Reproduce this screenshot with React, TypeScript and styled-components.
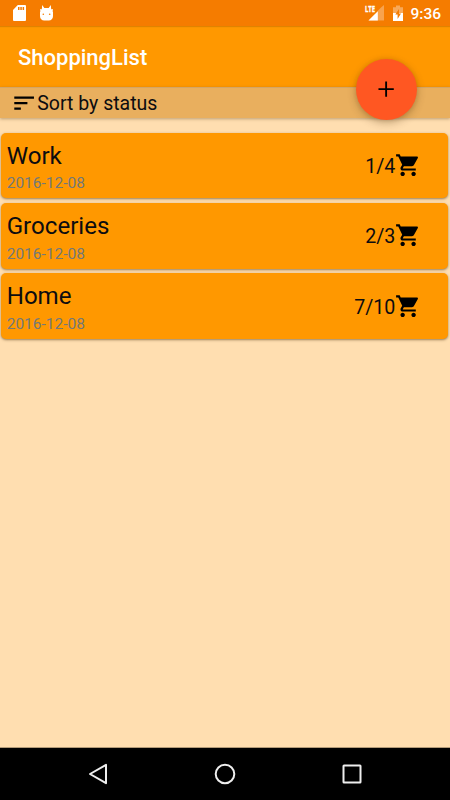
import React from 'react';
import styled, { createGlobalStyle } from 'styled-components';

const GlobalStyle = createGlobalStyle`
  * { box-sizing: border-box; }
  html, body { margin: 0; padding: 0; }
  body { font-family: Roboto, "Liberation Sans", sans-serif; color: #0c0c10; }
  svg { display: block; flex: none; overflow: visible; }
`;

const Screen = styled.div`
  width: 450px;
  height: 800px;
  display: flex;
  flex-direction: column;
  overflow: hidden;
  background: #ffdeb0;
`;

const StatusBar = styled.div`
  height: 26px;
  flex: none;
  display: flex;
  align-items: center;
  justify-content: space-between;
  padding: 0 9px 0 13px;
  background: #f57c00;
  box-shadow: 0 1px 1px rgba(100, 50, 0, 0.2);
  z-index: 1;
`;

const StatusGroup = styled.div`
  display: flex;
  align-items: center;
`;

const Clock = styled.span`
  font-size: 15.5px;
  font-weight: 500;
  line-height: 26px;
  color: #fff;
  margin-left: 7px;
  padding-top: 2px;
`;

const Header = styled.header`
  position: relative;
  flex: none;
`;

const Toolbar = styled.div`
  height: 61px;
  display: flex;
  align-items: center;
  padding: 3px 18px 0;
  background: #ff9800;
`;

const Title = styled.h1`
  margin: 0;
  font-size: 22px;
  font-weight: 500;
  line-height: 26px;
  color: #fff;
`;

const SortBar = styled.div`
  height: 31px;
  display: flex;
  align-items: center;
  padding-left: 11px;
  background: #e9af5e;
  border-top: 1px solid #d4a566;
  box-shadow: 0 1px 3px rgba(90, 60, 20, 0.4);
`;

const SortLabel = styled.span`
  font-size: 19.5px;
  line-height: 29px;
  padding-top: 1px;
`;

const AddButton = styled.button`
  position: absolute;
  right: 33px;
  bottom: -2px;
  width: 61px;
  height: 61px;
  padding: 0;
  border: 0;
  border-radius: 50%;
  display: grid;
  place-items: center;
  background: #ff5722;
  box-shadow: 0 3px 8px rgba(70, 40, 0, 0.3), 0 0 4px rgba(70, 40, 0, 0.12);
`;

const CardList = styled.main`
  flex: 1;
  display: flex;
  flex-direction: column;
  gap: 4.6px;
  padding: 14.5px 1.7px 0 1.3px;
`;

const Card = styled.article`
  height: 65.8px;
  display: flex;
  align-items: center;
  justify-content: space-between;
  padding: 0 26.8px 0 5.4px;
  border-radius: 5px;
  background: #ff9800;
  box-shadow: 0 1px 2.5px rgba(70, 45, 10, 0.55);
`;

const CardText = styled.div`
  display: flex;
  flex-direction: column;
  padding-top: 3px;
`;

const Name = styled.span`
  font-size: 24.1px;
  line-height: 30px;
`;

const DateText = styled.span`
  font-size: 15.5px;
  line-height: 20px;
  padding-top: 2.8px;
  color: #73787a;
`;

const Count = styled.div`
  display: flex;
  align-items: center;
  font-size: 19.6px;
  line-height: 24px;
  padding-top: 3.4px;

  svg { margin-top: -4px; }
`;

const NavBar = styled.nav`
  height: 53px;
  flex: none;
  display: flex;
  align-items: center;
  justify-content: space-between;
  padding: 0 85px;
  border-top: 1px solid #b39b78;
  background: #000;
`;

const SdCardIcon = () => (
  <svg width="13" height="16" viewBox="0 0 13 16">
    <path
      d="M4.800 0H12a1 1 0 0 1 1 1v14a1 1 0 0 1-1 1H1a1 1 0 0 1-1-1V5zM5 2v3h1.500V2zm2.300 0v3h1.500V2zm2.300 0v3h1.500V2z"
      fill="#fff"
      fillRule="evenodd"
    />
  </svg>
);

const BugdroidSvg = styled.svg`
  margin: -1px 0 0 13.5px;
`;

const BugdroidIcon = () => (
  <BugdroidSvg width="13" height="16" viewBox="0 0 13 16">
    <path
      d="M2.200 0 4.300 3h4.400L10.800 0l.4 4.200H13v1.300h-.5v1H13V11c0 2.800-1.800 4.500-4.200 4.500H4.200C1.800 15.500 0 13.800 0 11V6.500h.5v-1H0V4.200h1.800z"
      fill="#fff"
    />
    <circle cx="3.300" cy="9.300" r=".8" fill="#f57c00" />
    <circle cx="9.700" cy="9.300" r=".8" fill="#f57c00" />
  </BugdroidSvg>
);

const LteText = styled.text`
  font-family: "Open Sans", Roboto, sans-serif;
  font-size: 9px;
  font-weight: 700;
  fill: #fff;
  stroke: #fff;
  stroke-width: 0.4;
`;

const SignalIcon = () => (
  <svg width="20" height="18" viewBox="0 0 20 18">
    <path d="M19 1v15.500H3.500l9-9V7L16 3.500z" fill="#fff" opacity=".3" />
    <path d="M12.800 7.200v9.300H3.500z" fill="#fff" />
    <LteText x="0" y="7.800" textLength="10" lengthAdjust="spacingAndGlyphs">LTE</LteText>
  </svg>
);

const BatterySvg = styled.svg`
  margin-left: 8px;
`;

const BatteryIcon = () => (
  <BatterySvg width="10" height="16" viewBox="0 0 10 16">
    <path d="M0 2.200h3V.5h4v1.700h3V8H0z" fill="#fff" opacity=".35" />
    <path d="M0 8h10v8H0z" fill="#fff" />
    <path d="M6 4 2.300 9.600h2.300V14L8 8.400H6z" fill="#f57c00" />
  </BatterySvg>
);

const SortIcon = () => (
  <svg width="26.250" height="26.250" viewBox="0 0 24 24">
    <path d="M3 18h6v-2H3zM3 6v2h18V6zm0 7h12v-2H3z" />
  </svg>
);

const PlusIcon = () => (
  <svg width="26.250" height="26.250" viewBox="0 0 24 24">
    <path d="M19 12.850h-6.150V19h-1.700v-6.150H5v-1.700h6.150V5h1.700v6.150H19z" />
  </svg>
);

const CartIcon = () => (
  <svg width="26.250" height="26.250" viewBox="0 0 24 24">
    <path d="M7 18c-1.100 0-1.990.9-1.990 2S5.900 22 7 22s2-.9 2-2-.9-2-2-2zM1 2v2h2l3.600 7.590-1.350 2.450c-.16.280-.25.610-.25.960 0 1.100.9 2 2 2h12v-2H7.420c-.14 0-.25-.11-.25-.25l.03-.12.9-1.630h7.450c.75 0 1.410-.41 1.750-1.030l3.580-6.490c.08-.14.12-.31.12-.48 0-.55-.45-1-1-1H5.210l-.94-2H1zm16 16c-1.100 0-1.990.9-1.990 2s.89 2 1.990 2 2-.9 2-2-.9-2-2-2z" />
  </svg>
);

const NavIcon = styled.svg`
  fill: none;
  stroke: #eee;
  stroke-width: 2;
  stroke-linejoin: round;
`;

const lists = [
  { name: 'Work', date: '2016-12-08', count: '1/4' },
  { name: 'Groceries', date: '2016-12-08', count: '2/3' },
  { name: 'Home', date: '2016-12-08', count: '7/10' },
];

export default function App() {
  return (
    <Screen>
      <GlobalStyle />
      <StatusBar>
        <StatusGroup>
          <SdCardIcon />
          <BugdroidIcon />
        </StatusGroup>
        <StatusGroup>
          <SignalIcon />
          <BatteryIcon />
          <Clock>9:36</Clock>
        </StatusGroup>
      </StatusBar>
      <Header>
        <Toolbar>
          <Title>ShoppingList</Title>
        </Toolbar>
        <SortBar>
          <SortIcon />
          <SortLabel>Sort by status</SortLabel>
        </SortBar>
        <AddButton aria-label="Add list">
          <PlusIcon />
        </AddButton>
      </Header>
      <CardList>
        {lists.map((list) => (
          <Card key={list.name}>
            <CardText>
              <Name>{list.name}</Name>
              <DateText>{list.date}</DateText>
            </CardText>
            <Count>
              {list.count}
              <CartIcon />
            </Count>
          </Card>
        ))}
      </CardList>
      <NavBar>
        <NavIcon width="26" height="24" viewBox="0 0 26 24">
          <path d="M21 2.800v18.400L5 12z" />
        </NavIcon>
        <NavIcon width="24" height="24" viewBox="0 0 24 24">
          <circle cx="12" cy="12" r="9.300" />
        </NavIcon>
        <NavIcon width="26" height="24" viewBox="0 0 26 24">
          <rect x="4.500" y="3.500" width="17" height="17" rx=".5" />
        </NavIcon>
      </NavBar>
    </Screen>
  );
}
